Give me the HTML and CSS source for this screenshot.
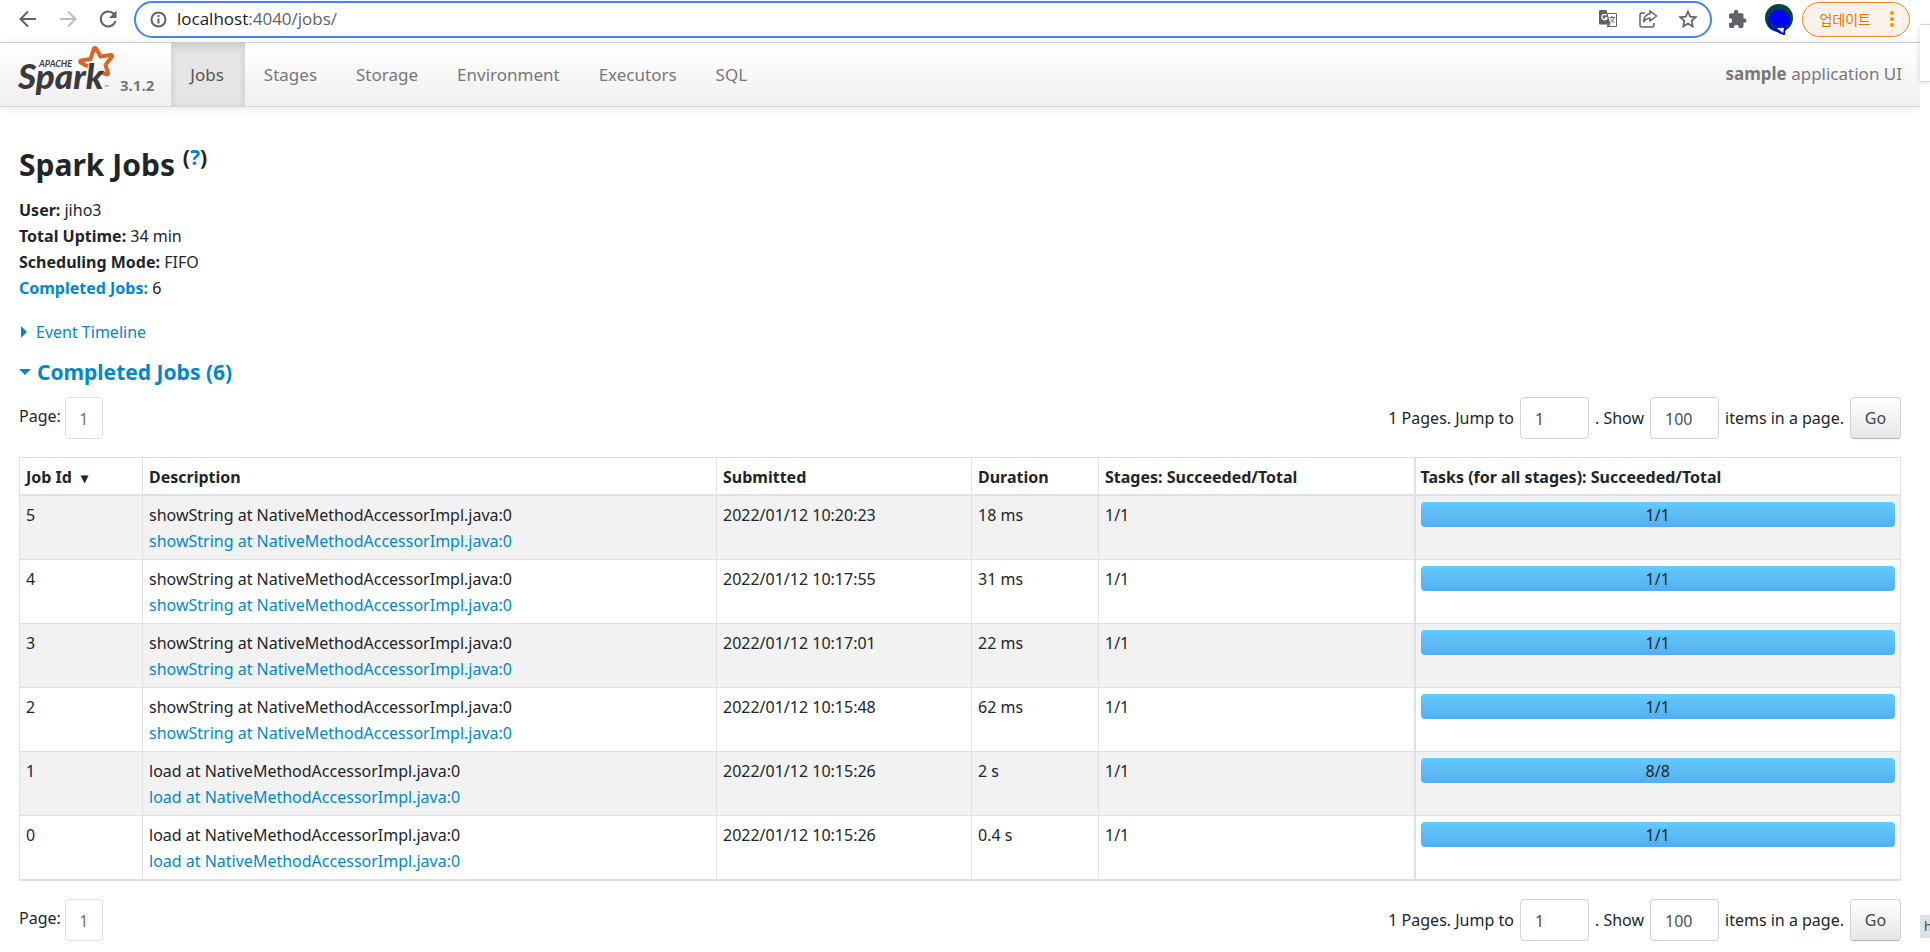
FILE: index.html
```html
<!DOCTYPE html>
<html lang="en">
<head>
<meta charset="utf-8">
<title>sample - Spark Jobs</title>
<link rel="stylesheet" href="styles.css">
</head>
<body>
<div class="window">
  <header class="toolbar">
    <button class="tool" aria-label="Back"><svg width="20" height="20" viewBox="0 0 20 20" fill="none" stroke="#5f6368" stroke-width="2"><path d="M18 10H3M10 2.500L2.500 10l7.500 7.500"/></svg></button>
    <button class="tool" aria-label="Forward"><svg width="20" height="20" viewBox="0 0 20 20" fill="none" stroke="#babcbe" stroke-width="2"><path d="M2 10h15M10 2.500l7.500 7.500-7.500 7.500"/></svg></button>
    <button class="tool" aria-label="Reload"><svg width="20" height="20" viewBox="0 0 20 20" fill="none" stroke="#5f6368" stroke-width="2"><path d="M16 5A7.500 7.500 0 1 0 17.500 12"/><path d="M18.500 1.500v7.500H11z" fill="#5f6368" stroke="none"/></svg></button>
    <div class="address">
      <svg width="17" height="17" viewBox="0 0 17 17" fill="none" stroke="#5f6368" stroke-width="2"><circle cx="8.500" cy="8.500" r="7"/><path d="M8.500 7.500v5M8.500 4v2"/></svg>
      <div class="url"><span class="host">localhost</span>:4040/jobs/</div>
      <button class="tool" aria-label="Translate"><svg width="20" height="20" viewBox="0 0 20 20"><path d="M8 4.500h10.500v13H9.500" fill="none" stroke="#5f6368"/><path d="M2 1h6.500l4 14.500H2a1 1 0 0 1-1-1V2a1 1 0 0 1 1-1z" fill="#5f6368"/><path d="M9 15.500h3.500L9.500 19z" fill="#5f6368"/><path d="M8.500 6.200A2.700 2.700 0 1 0 9 9H6.500" fill="none" stroke="#fff" stroke-width="1.300"/><path d="M11.500 8.500H17M14 7v1.500M16 8.500c-.5 2.500-2 4-3.500 5M12.500 10l4 4" fill="none" stroke="#5f6368"/></svg></button>
      <button class="tool" aria-label="Share"><svg width="20" height="20" viewBox="0 0 20 20" fill="none" stroke="#5f6368" stroke-width="1.500"><path d="M7 4H4a2 2 0 0 0-2 2v10a2 2 0 0 0 2 2h10a2 2 0 0 0 2-2v-2"/><path d="M12 2l6.500 5-6.500 5V9.300C9 9.300 7 10.500 5.500 13 5.800 8.500 8 5.300 12 4.800z"/></svg></button>
      <button class="tool" aria-label="Bookmark"><svg width="20" height="20" viewBox="0 0 20 20" fill="none" stroke="#5f6368" stroke-width="1.700"><path d="M10 2.500l2.200 5.200 5.600.5-4.200 3.700 1.200 5.500L10 14.500l-4.800 2.900 1.200-5.500L2.200 8.200l5.600-.5z"/></svg></button>
    </div>
    <button class="tool extensions" aria-label="Extensions"><svg width="20" height="20" viewBox="0 0 20 20" fill="#5f6368"><path d="M16.800 9.500h-1.300V6a1.700 1.700 0 0 0-1.700-1.700h-3.500V3a2.200 2.200 0 0 0-4.400 0v1.300H2.700A1.700 1.700 0 0 0 1 6v3.300h1.300a2.400 2.400 0 0 1 0 4.700H1v3.300A1.700 1.700 0 0 0 2.700 19H6v-1.300a2.400 2.400 0 0 1 4.700 0V19h3.100a1.700 1.700 0 0 0 1.700-1.700v-3.500h1.300a2.200 2.200 0 0 0 0-4.300z"/></svg></button>
    <button class="tool" aria-label="Profile"><svg width="28" height="32" viewBox="0 0 28 32"><circle cx="14" cy="15" r="14" fill="#00483c"/><path d="M5 11l5-4 7-1 3 3 4 3 1 6-1 4-5 1-7 1-6-4-1-5z" fill="#00f"/><path d="M5 13l-1 7q0 4 4 5l6 4 5 2 1-9" fill="none" stroke="#00f" stroke-width="2"/><path d="M12 25l6 5 1-5z" fill="#f4f4ff"/></svg></button>
    <button class="update">업데이트<svg width="6" height="18" viewBox="0 0 6 18" fill="#f29900"><circle cx="3" cy="3" r="2"/><circle cx="3" cy="9" r="2"/><circle cx="3" cy="15" r="2"/></svg></button>
  </header>

  <nav class="navbar">
    <a class="brand" href="#"><svg width="98" height="54" viewBox="0 0 98 54" role="img" aria-label="Apache Spark"><path d="M70 23.500l-7.500-4q-1-1.500 1-2l9-1.500 3.500-10.500q1-1 2 0l4.500 8 10.500-1.500q1.500 0 1 1.500l-6.500 8.500 2.500 8q0 1.500-1.500 1.500l-6-2.500" fill="none" stroke="#dc6427" stroke-width="4" stroke-linejoin="round"/><text x="21" y="24" class="logo-small">APACHE</text><text x="0" y="46" class="logo-word">Spark</text><text x="86" y="46" class="logo-mark">™</text></svg><span class="version">3.1.2</span></a>
    <a class="tab active" href="#">Jobs</a>
    <a class="tab" href="#">Stages</a>
    <a class="tab" href="#">Storage</a>
    <a class="tab" href="#">Environment</a>
    <a class="tab" href="#">Executors</a>
    <a class="tab" href="#">SQL</a>
    <p class="app-name"><strong>sample</strong> application UI</p>
  </nav>

  <main class="content">
    <h1 class="title">Spark Jobs <sup>(<a href="#">?</a>)</sup></h1>
    <ul class="summary">
      <li><strong>User:</strong> jiho3</li>
      <li><strong>Total Uptime:</strong> 34 min</li>
      <li><strong>Scheduling Mode:</strong> FIFO</li>
      <li><a href="#completed"><strong>Completed Jobs:</strong></a> 6</li>
    </ul>
    <a class="timeline" href="#"><span class="arrow-right"></span>Event Timeline</a>
    <h2 class="section" id="completed"><a href="#"><span class="arrow-down"></span>Completed Jobs (6)</a></h2>

    <div class="pager">
      <div class="pages"><span>Page:</span><a class="page-link" href="#">1</a></div>
      <form class="jump">
        <label for="page-top">1 Pages. Jump to</label><input id="page-top" type="text" value="1">
        <label for="size-top">. Show</label><input id="size-top" type="text" value="100">
        <span>items in a page.</span><button class="go" type="button">Go</button>
      </form>
    </div>

    <table class="jobs">
      <colgroup><col class="c-id"><col class="c-desc"><col class="c-sub"><col class="c-dur"><col class="c-stages"><col class="c-tasks"></colgroup>
      <thead><tr><th>Job Id <span class="sort">▾</span></th><th>Description</th><th>Submitted</th><th>Duration</th><th>Stages: Succeeded/Total</th><th>Tasks (for all stages): Succeeded/Total</th></tr></thead>
      <tbody>
        <tr><td>5</td><td>showString at NativeMethodAccessorImpl.java:0<br><a href="#">showString at NativeMethodAccessorImpl.java:0</a></td><td>2022/01/12 10:20:23</td><td>18 ms</td><td>1/1</td><td><div class="bar">1/1</div></td></tr>
        <tr><td>4</td><td>showString at NativeMethodAccessorImpl.java:0<br><a href="#">showString at NativeMethodAccessorImpl.java:0</a></td><td>2022/01/12 10:17:55</td><td>31 ms</td><td>1/1</td><td><div class="bar">1/1</div></td></tr>
        <tr><td>3</td><td>showString at NativeMethodAccessorImpl.java:0<br><a href="#">showString at NativeMethodAccessorImpl.java:0</a></td><td>2022/01/12 10:17:01</td><td>22 ms</td><td>1/1</td><td><div class="bar">1/1</div></td></tr>
        <tr><td>2</td><td>showString at NativeMethodAccessorImpl.java:0<br><a href="#">showString at NativeMethodAccessorImpl.java:0</a></td><td>2022/01/12 10:15:48</td><td>62 ms</td><td>1/1</td><td><div class="bar">1/1</div></td></tr>
        <tr><td>1</td><td>load at NativeMethodAccessorImpl.java:0<br><a href="#">load at NativeMethodAccessorImpl.java:0</a></td><td>2022/01/12 10:15:26</td><td>2 s</td><td>1/1</td><td><div class="bar">8/8</div></td></tr>
        <tr><td>0</td><td>load at NativeMethodAccessorImpl.java:0<br><a href="#">load at NativeMethodAccessorImpl.java:0</a></td><td>2022/01/12 10:15:26</td><td>0.4 s</td><td>1/1</td><td><div class="bar">1/1</div></td></tr>
      </tbody>
    </table>

    <div class="pager">
      <div class="pages"><span>Page:</span><a class="page-link" href="#">1</a></div>
      <form class="jump">
        <label for="page-end">1 Pages. Jump to</label><input id="page-end" type="text" value="1">
        <label for="size-end">. Show</label><input id="size-end" type="text" value="100">
        <span>items in a page.</span><button class="go" type="button">Go</button>
      </form>
    </div>
  </main>
</div>
<aside class="edge">
  <div class="edge-top"></div>
  <div class="edge-bar"></div>
  <div class="edge-status">h</div>
</aside>
</body>
</html>
```

FILE: styles.css
```css
* { box-sizing: border-box; }
body {
  margin: 0;
  display: flex;
  min-height: 100vh;
  background: #fff;
  color: #212529;
  font: 16px/26px "Noto Sans", "Noto Sans CJK KR", sans-serif;
}
a { color: #0088cc; text-decoration: none; }
button, input { font: inherit; }
.window { flex: 1; min-width: 0; }

.toolbar {
  display: flex;
  align-items: center;
  height: 43px;
  padding: 0 20px 4px 18px;
  border-bottom: 1px solid #d5d6d8;
}
.tool {
  display: flex;
  padding: 0;
  margin-right: 20px;
  border: 0;
  background: none;
}
.tool svg { display: block; }
.tool.extensions { margin-right: 17px; }
.address {
  flex: 1;
  display: flex;
  align-items: center;
  height: 37px;
  margin-right: 16px;
  margin-left: -4px;
  padding-left: 14px;
  border: 2px solid #4285f4;
  border-radius: 19px;
}
.address .tool:last-child { margin-right: 12px; }
.url { flex: 1; margin-left: 10px; color: #5f6368; font-family: "Open Sans", sans-serif; font-size: 17px; }
.host { color: #202124; }
.update {
  display: flex;
  align-items: center;
  gap: 18px;
  height: 35px;
  margin-left: -11px;
  margin-right: -10px;
  padding: 0 14px 0 16px;
  border: 1px solid #e8871a;
  border-radius: 18px;
  background: #fdf2e9;
  color: #e37400;
  font: 14px/20px "Noto Sans CJK KR", sans-serif;
}

.navbar {
  display: flex;
  height: 64px;
  padding: 0 18px;
  border-bottom: 1px solid #d4d4d4;
  background: linear-gradient(#fff, #f0f0f0);
  box-shadow: 0 1px 10px rgba(0, 0, 0, .1);
}
.brand { display: flex; align-items: flex-end; margin-right: 17px; color: #777; }
.brand svg { align-self: flex-start; }
.version { margin: 0 0 8px 4px; font: 700 15px/26px "Open Sans", sans-serif; }
.logo-small { font: italic 700 9px Lato, sans-serif; fill: #3c3a3e; }
.logo-word { font: italic 900 35px Lato, sans-serif; fill: #3c3a3e; }
.logo-mark { font: 6px Lato, sans-serif; fill: #777; }
.tab { padding: 19px 20px 0 19px; color: #777; font-size: 17px; }
.tab.active { padding-right: 21px; background: #e5e5e5; box-shadow: inset 0 3px 8px rgba(0, 0, 0, .125); color: #555; }
.app-name { margin: 18px 0 0 auto; color: #777; font-size: 17px; }

.content { padding: 40px 19px 10px; }
.title { margin: 0; font-size: 30px; line-height: 36px; font-weight: 700; }
.title sup { font-size: 21px; line-height: 0; }
.summary { list-style: none; margin: 14px 0 18px; padding: 0; }
.timeline { display: flex; align-items: center; }
.arrow-right {
  width: 7px;
  margin: 0 8px 0 2px;
  border: 6px solid transparent;
  border-right: 0;
  border-left-color: #0088cc;
}
.section { margin: 13px 0 11px; font-size: 21px; line-height: 28px; }
.section a { display: flex; align-items: center; }
.arrow-down {
  margin-right: 6px;
  border: 6px solid transparent;
  border-bottom: 0;
  border-top-color: #0088cc;
}
.pager { display: flex; justify-content: space-between; }
.pages { display: flex; gap: 4px; line-height: 38px; }
.page-link {
  width: 38px;
  height: 42px;
  border: 1px solid #dee2e6;
  border-radius: 4px;
  color: #6c757d;
  line-height: 42px;
  text-align: center;
}
.jump { display: flex; align-items: center; gap: 6px; }
.jump input {
  width: 69px;
  height: 42px;
  padding: 2px 14px 0;
  border: 1px solid #ced4da;
  border-radius: 4px;
  color: #495057;
}
.go {
  width: 51px;
  height: 42px;
  padding: 0;
  border: 1px solid #ced4da;
  border-bottom-color: #b3b3b3;
  border-radius: 4px;
  background: linear-gradient(#fff, #e6e6e6);
  box-shadow: 0 1px 2px rgba(0, 0, 0, .05);
  color: #444;
}

.jobs {
  width: 100%;
  margin: 18px 0;
  border-collapse: collapse;
  table-layout: fixed;
  border: 1px solid #dee2e6;
  border-bottom-width: 2px;
}
.c-id { width: 123px; }
.c-desc { width: 574px; }
.c-sub { width: 255px; }
.c-dur { width: 127px; }
.c-stages { width: 316px; }
.jobs th, .jobs td {
  padding: 6px 6px 5px;
  border: 1px solid #dee2e6;
  text-align: left;
  vertical-align: top;
}
.jobs th { padding-bottom: 4px; border-bottom-width: 2px; }
.jobs th:last-child, .jobs td:last-child { border-left-width: 2px; padding-left: 5px; padding-right: 5px; }
.jobs tbody tr:nth-child(odd) { background: #f2f2f2; }
.sort { margin-left: 5px; font-size: 14px; line-height: 20px; }
.bar {
  height: 25px;
  border-radius: 4px;
  background: linear-gradient(#64caff, #54aeee);
  line-height: 27px;
  text-align: center;
}

.edge { display: flex; flex-direction: column; width: 10px; background: #fff; }
.edge-top { height: 25px; border-bottom: 1px solid #d5d6d8; }
.edge-bar { height: 57px; border-bottom: 1px solid #d4d4d4; box-shadow: 0 1px 6px rgba(0, 0, 0, .15); }
.edge-status {
  height: 23px;
  margin: auto 0 14px;
  padding-left: 4px;
  overflow: hidden;
  background: #dee1e6;
  color: #444;
  font-size: 13px;
  line-height: 23px;
}
```
